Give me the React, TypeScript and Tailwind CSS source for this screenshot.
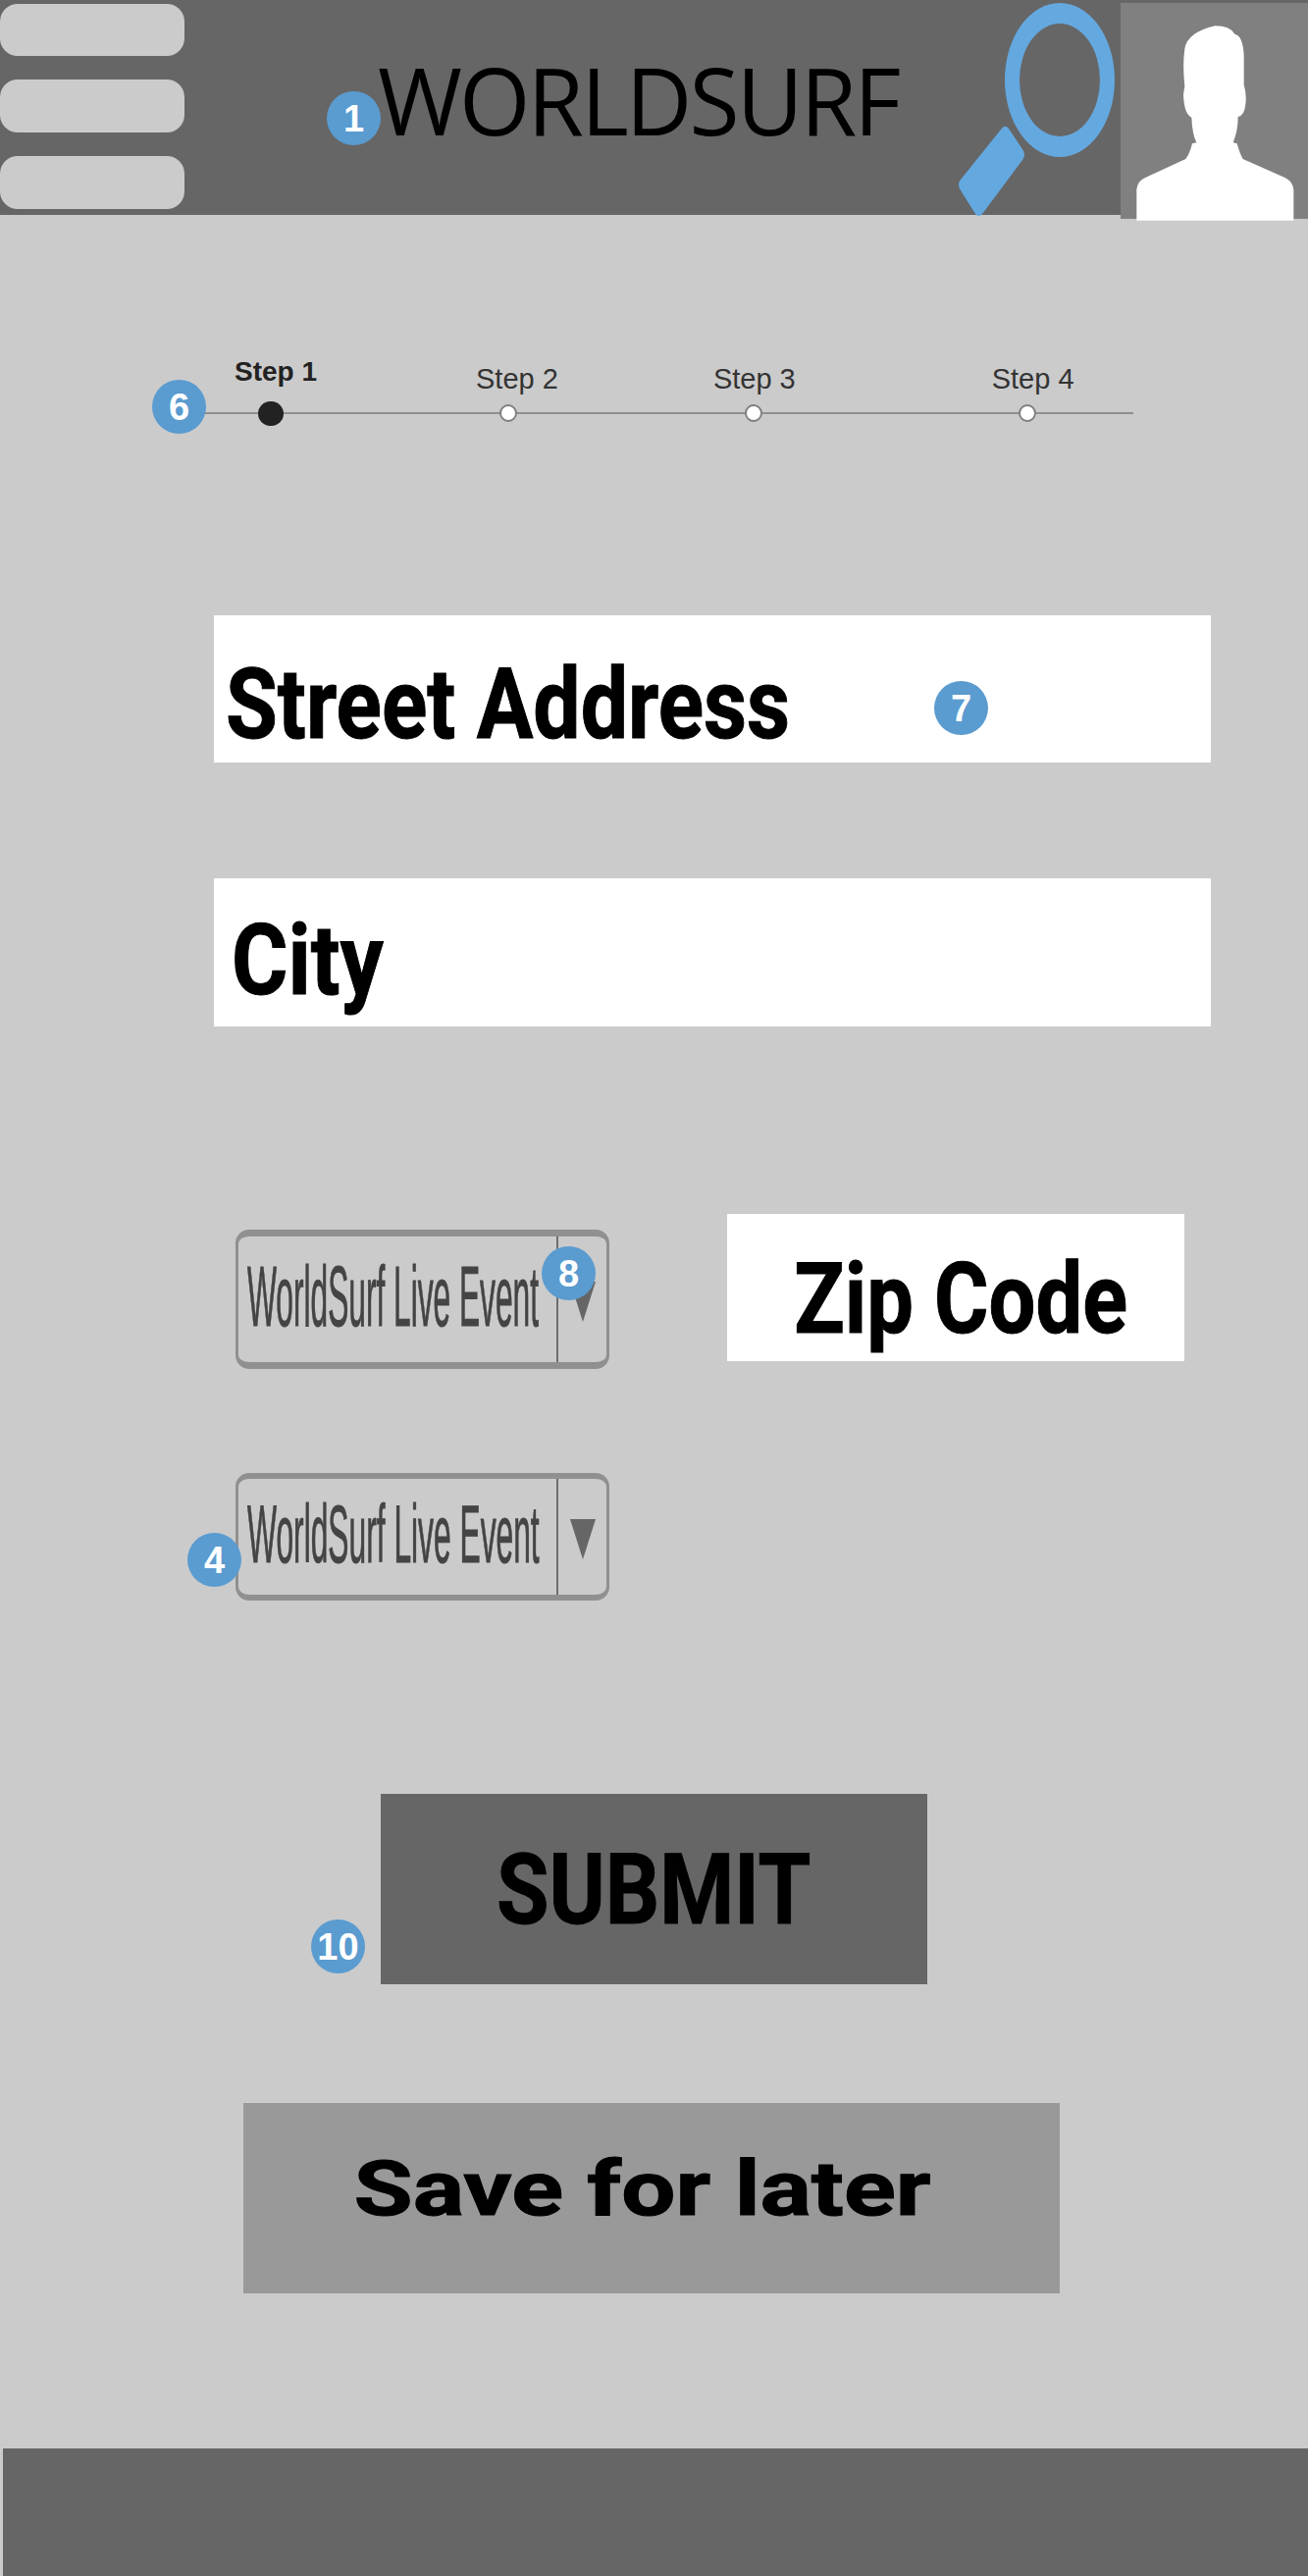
import type { ReactNode } from "react";

const Bullet = ({ n, className }: { n: string; className: string }) => (
  <span className={`absolute flex h-[55px] w-[55px] items-center justify-center rounded-full bg-[#5a9bd0] text-[38px] leading-none font-bold text-white font-['Liberation_Sans',sans-serif] ${className}`}>{n}</span>
);

const Select = ({ className, text, children }: { className: string; text: string; children?: ReactNode }) => (
  <div className={`relative flex w-[381px] shrink-0 items-center rounded-[14px] border-x-[3px] border-[#909090] ${className}`}>
    <span className={`ml-[9px] mb-[6px] w-[315px] origin-left whitespace-nowrap leading-none text-[#444] [-webkit-text-stroke:1px_#444] font-['Liberation_Sans',sans-serif] ${text}`}>WorldSurf Live Event</span>
    <div className="flex w-[54px] items-center justify-center self-stretch border-l-2 border-[#6e6e6e]">
      <span className="mt-[4px] h-0 w-0 border-x-[13px] border-t-[41px] border-x-transparent border-t-[#666]" />
    </div>
    {children}
  </div>
);

const heavy = "font-['Roboto',sans-serif] font-bold text-black whitespace-nowrap leading-none text-[101px] [-webkit-text-stroke:1px_#000]";
const openDot = "h-[18px] w-[18px] rounded-full border-2 border-[#808080] bg-white";

export default function App() {
  return (
    <div className="h-[2625px] w-[1333px] overflow-hidden bg-[#cbcbcb]">
      <header className="relative flex h-[219px] bg-[#666]">
        <div className="flex w-[188px] flex-col gap-6 pt-1">
          <div className="h-[53px] rounded-[18px] bg-[#cbcbcb]" />
          <div className="h-[54px] rounded-[18px] bg-[#cbcbcb]" />
          <div className="h-[54px] rounded-[18px] bg-[#cbcbcb]" />
        </div>
        <h1 className="ml-[197px] mt-[41px] h-fit origin-left scale-x-[0.97] whitespace-nowrap text-[96px] leading-[120px] font-normal tracking-[-3px] text-black font-['Open_Sans',sans-serif]">WORLDSURF</h1>
        <svg className="ml-auto mr-[5px] shrink-0 overflow-visible" width="162" height="222" viewBox="975 0 162 222">
          <path fillRule="evenodd" d="M1024 81.5 A56 78.5 0 1 1 1136 81.5 A56 78.5 0 1 1 1024 81.5 Z M1039 81.5 A41 57.5 0 1 0 1121 81.5 A41 57.5 0 1 0 1039 81.5 Z" fill="#64a8e0" />
          <path d="M1020 132 Q1024 126 1028 131 L1042 152 Q1046 158 1042 163 L1001 218 Q997 222 994 218 L979 194 Q975 188 979 183 Z" fill="#64a8e0" />
        </svg>
        <div className="mt-[3px] h-[220px] w-[191px] shrink-0 bg-[#808080]">
          <svg className="overflow-visible" width="191" height="220" viewBox="726 10 573 660">
            <path d="M775 675 L775 580 Q778 555 800 545 L925 487 Q938 470 945 440 L958 437 Q945 410 943 360 Q920 350 918 290 L922 265 Q915 200 922 150 Q930 100 1015 80 Q1060 80 1075 105 Q1100 110 1103 170 L1103 260 Q1112 290 1108 320 Q1105 355 1085 358 Q1085 400 1070 437 L1082 440 Q1090 470 1100 487 L1230 545 Q1253 558 1255 580 L1255 675 Z" fill="#fff" />
          </svg>
        </div>
        <Bullet n="1" className="left-[333px] top-[93px]" />
      </header>

      <section className="relative mt-[151px] h-[97px] font-['Liberation_Sans',sans-serif] text-[29px] leading-none text-[#333]">
        <div className="flex h-[31px] items-end pl-[239px]">
          <span className="mb-[8px] text-[28px] font-bold text-[#222]">Step 1</span>
          <span className="ml-[162px]">Step 2</span>
          <span className="ml-[158px]">Step 3</span>
          <span className="ml-[200px]">Step 4</span>
        </div>
        <div className="relative ml-[190px] mt-[7px] flex h-[26px] w-[965px] items-center">
          <div className="absolute inset-x-0 top-[12px] h-[2px] bg-[#8f8f8f]" />
          <span className="relative ml-[73px] h-[25px] w-[26px] rounded-full bg-[#222]" />
          <span className={`relative ml-[220px] ${openDot}`} />
          <span className={`relative ml-[232px] ${openDot}`} />
          <span className={`relative ml-[261px] ${openDot}`} />
        </div>
        <Bullet n="6" className="left-[155px] top-[17px]" />
      </section>

      <div className="relative ml-[218px] mt-[160px] flex h-[150px] w-[1016px] items-center bg-white pl-[12px] pt-[30px]">
        <span className={`${heavy} origin-left scale-x-[0.85]`}>Street Address</span>
        <Bullet n="7" className="left-[734px] top-[67px]" />
      </div>
      <div className="ml-[218px] mt-[118px] flex h-[151px] w-[1016px] items-center bg-white pl-[18px] pt-[16px]">
        <span className={`${heavy} origin-left scale-x-[0.87]`}>City</span>
      </div>

      <div className="ml-[240px] mt-[191px] flex items-start gap-[120px]">
        <Select className="mt-[16px] h-[142px] border-y-[7px]" text="scale-x-[0.36] text-[88px]">
          <Bullet n="8" className="left-[309px] top-[10px]" />
        </Select>
        <div className="flex h-[150px] w-[466px] items-center justify-center bg-white pl-[11px] pt-[22px]">
          <span className={`${heavy} scale-x-[0.84]`}>Zip Code</span>
        </div>
      </div>

      <div className="ml-[240px] mt-[106px]">
        <Select className="h-[130px] border-y-[6px]" text="scale-x-[0.378] text-[84px]">
          <Bullet n="4" className="left-[-52px] top-[55px]" />
        </Select>
      </div>

      <button className="relative ml-[388px] mt-[197px] flex h-[194px] w-[557px] items-center justify-center bg-[#666]">
        <span className={`${heavy} scale-x-[0.86]`}>SUBMIT</span>
        <Bullet n="10" className="left-[-71px] top-[128px]" />
      </button>

      <button className="ml-[248px] mt-[121px] flex h-[194px] w-[832px] items-center justify-center bg-[#999] pb-[17px] pr-[18px]">
        <span className="font-['Roboto',sans-serif] font-bold text-black whitespace-nowrap leading-none text-[77px] scale-x-[1.27] [-webkit-text-stroke:1px_#000]">Save for later</span>
      </button>

      <footer className="ml-[3px] mt-[158px] h-[130px] bg-[#666]" />
    </div>
  );
}
